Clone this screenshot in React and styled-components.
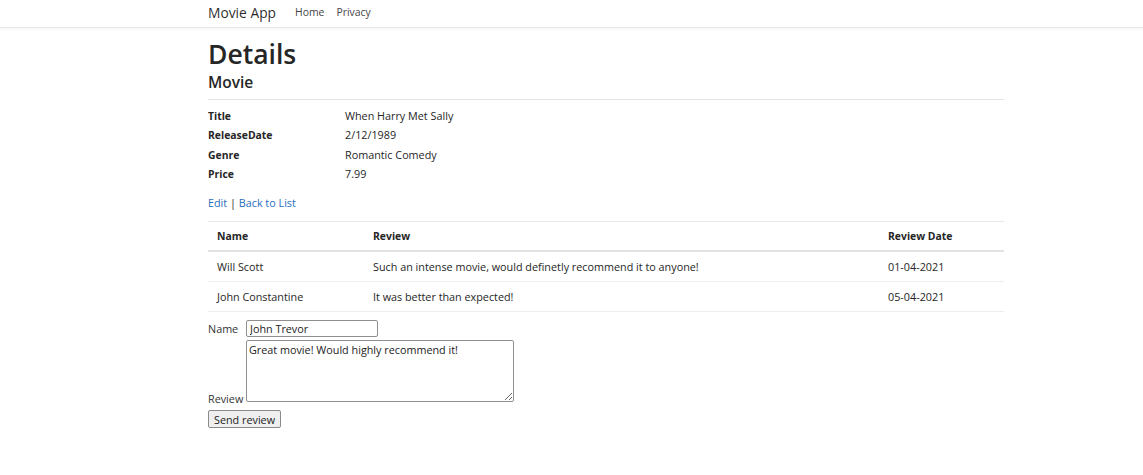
import styled, { createGlobalStyle } from "styled-components";

const GlobalStyle = createGlobalStyle`
  html, body {
    margin: 0;
    background: #fff;
  }
  body {
    font-family: "Open Sans", "Noto Sans", sans-serif;
    font-size: 10.8px;
    color: #262626;
  }
`;

const Nav = styled.header`
  box-sizing: border-box;
  height: 28px;
  padding-bottom: 3px;
  border-bottom: 1px solid #e8e8e8;
  box-shadow: 0 1px 3px rgba(0, 0, 0, 0.05);
  display: flex;
  align-items: center;
  padding-left: 208px;
`;

const Brand = styled.a`
  font-size: 13.8px;
  color: rgba(0, 0, 0, 0.85);
  margin-right: 19px;
  text-decoration: none;
`;

const NavLink = styled.a`
  font-size: 10.4px;
  color: #444;
  margin-right: 12px;
  text-decoration: none;
`;

const Main = styled.main`
  width: 796px;
  margin-left: 208px;
  padding-top: 9px;
`;

const Title = styled.h1`
  margin: 1px 0 0;
  font-size: 26.5px;
  font-weight: 600;
  line-height: 32px;
`;

const Subtitle = styled.h4`
  margin: 3px 0 0;
  font-size: 15.5px;
  font-weight: 600;
  line-height: 19px;
`;

const Rule = styled.hr`
  margin: 7px 0 8px;
  border: 0;
  border-top: 1px solid #e5e5e5;
`;

const DetailList = styled.dl`
  display: grid;
  grid-template-columns: 137px 1fr;
  row-gap: 3.4px;
  margin: 0;
  line-height: 16px;
`;

const Term = styled.dt`
  font-weight: 700;
  font-size: 10.4px;
`;

const Value = styled.dd`
  margin: 0;
`;

const Actions = styled.div`
  margin-top: 13px;
  line-height: 16px;
`;

const Link = styled.a`
  color: #2a6ebb;
  text-decoration: none;
`;

const Table = styled.table`
  width: 100%;
  margin-top: 10px;
  border-collapse: collapse;
  table-layout: fixed;
`;

const Th = styled.th`
  text-align: left;
  font-weight: 700;
  font-size: 10.4px;
  padding: 8px 9px 7px;
  line-height: 13px;
  border-top: 1px solid #e8e8e8;
  border-bottom: 2px solid #e2e2e2;
  width: ${(p) => p.$w || "auto"};
`;

const Td = styled.td`
  padding: 8px 9px;
  line-height: 13px;
  border-bottom: 1px solid #eeeeee;
`;

const Form = styled.form`
  margin-top: 8px;
  display: flex;
  flex-direction: column;
  align-items: flex-start;
`;

const Field = styled.div`
  display: flex;
  align-items: ${(p) => p.$align || "center"};
  gap: 4px;
  margin-bottom: 3px;
`;

const Label = styled.label`
  line-height: 13px;
  color: #333;
  width: 34px;
  margin-bottom: ${(p) => p.$drop || "0"};
`;

const Input = styled.input`
  box-sizing: border-box;
  width: 132px;
  height: 17px;
  font: inherit;
  padding: 0 3px;
  border: 1px solid #8f8f8f;
  border-radius: 2px;
  color: #222;
`;

const TextArea = styled.textarea`
  box-sizing: border-box;
  width: 268px;
  height: 62px;
  font: inherit;
  padding: 1px 2px;
  border: 1px solid #8f8f8f;
  border-radius: 2px;
  color: #222;
  resize: both;
`;

const Button = styled.button`
  margin-top: 5px;
  height: 18px;
  padding: 0 5px;
  font: inherit;
  color: #222;
  background: #efefef;
  border: 1px solid #8a8a8a;
  border-radius: 2px;
`;

const reviews = [
  { name: "Will Scott", text: "Such an intense movie, would definetly recommend it to anyone!", date: "01-04-2021" },
  { name: "John Constantine", text: "It was better than expected!", date: "05-04-2021" },
];

export default function App() {
  return (
    <>
      <GlobalStyle />
      <Nav>
        <Brand>Movie App</Brand>
        <NavLink>Home</NavLink>
        <NavLink>Privacy</NavLink>
      </Nav>
      <Main>
        <Title>Details</Title>
        <Subtitle>Movie</Subtitle>
        <Rule />
        <DetailList>
          <Term>Title</Term>
          <Value>When Harry Met Sally</Value>
          <Term>ReleaseDate</Term>
          <Value>2/12/1989</Value>
          <Term>Genre</Term>
          <Value>Romantic Comedy</Value>
          <Term>Price</Term>
          <Value>7.99</Value>
        </DetailList>
        <Actions>
          <Link href="#">Edit</Link> | <Link href="#">Back to List</Link>
        </Actions>
        <Table>
          <thead>
            <tr>
              <Th $w="138px">Name</Th>
              <Th>Review</Th>
              <Th $w="107px">Review Date</Th>
            </tr>
          </thead>
          <tbody>
            {reviews.map((r) => (
              <tr key={r.name}>
                <Td>{r.name}</Td>
                <Td>{r.text}</Td>
                <Td>{r.date}</Td>
              </tr>
            ))}
          </tbody>
        </Table>
        <Form onSubmit={(e) => e.preventDefault()}>
          <Field>
            <Label>Name</Label>
            <Input defaultValue="John Trevor" />
          </Field>
          <Field $align="flex-end">
            <Label $drop="-3px">Review</Label>
            <TextArea defaultValue="Great movie! Would highly recommend it!" />
          </Field>
          <Button>Send review</Button>
        </Form>
      </Main>
    </>
  );
}
